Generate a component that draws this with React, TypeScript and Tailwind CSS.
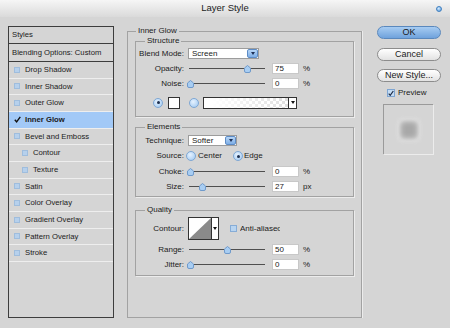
import React from "react";

const items = [
  { label: "Drop Shadow" },
  { label: "Inner Shadow" },
  { label: "Outer Glow" },
  { label: "Inner Glow", active: true },
  { label: "Bevel and Emboss" },
  { label: "Contour", indent: true },
  { label: "Texture", indent: true },
  { label: "Satin" },
  { label: "Color Overlay" },
  { label: "Gradient Overlay" },
  { label: "Pattern Overlay" },
  { label: "Stroke" },
];

function Radio({ on }: { on?: boolean }) {
  return (
    <span className="flex w-[10px] h-[10px] shrink-0 items-center justify-center rounded-full border border-[#7ea7d4] bg-[radial-gradient(circle_at_40%_35%,#e6f2ff,#9cc6f0)]">
      {on && <span className="w-[3px] h-[3px] rounded-full bg-[#1d2f4f]" />}
    </span>
  );
}

function Caret() {
  return <span className="w-0 h-0 border-x-[2px] border-x-transparent border-t-[3px] border-t-[#111]" />;
}

function Dropdown({ value, wide }: { value: string; wide?: boolean }) {
  return (
    <div
      className={
        "flex h-[11px] items-stretch border border-[#9c9c9c] bg-white " +
        (wide ? "w-[71px]" : "w-[49px]")
      }
    >
      <span className="flex-1 pl-[3px] leading-[9px]">{value}</span>
      <span className="flex w-[11px] items-center justify-center rounded-[2px] border border-[#5d8cc6] bg-[linear-gradient(#b7d6f7,#7eaee6)]">
        <span className="w-0 h-0 border-x-[2.5px] border-x-transparent border-t-[3px] border-t-[#1c2f55]" />
      </span>
    </div>
  );
}

function NumBox({ value }: { value: string }) {
  return (
    <div className="w-[27px] h-[11px] border border-[#c8c8c8] bg-white pl-[2px] leading-[9px] text-[#222]">
      {value}
    </div>
  );
}

function SliderRow({
  label,
  pos,
  value,
  unit = "%",
}: {
  label: string;
  pos: number;
  value: string;
  unit?: string;
}) {
  return (
    <div className="flex h-[15px] items-center">
      <span className="w-[48px] text-right">{label}</span>
      <div className="relative ml-[5px] flex h-[10px] w-[76px] items-center">
        <div className="h-px w-full bg-[#4f4f4f]" />
        <svg
          className="absolute top-[1px]"
          style={{ left: pos - 3.5 }}
          width="7"
          height="8"
          viewBox="0 0 7 8"
        >
          <path
            d="M3.5 0.5 L6.5 3 L6.5 6 Q6.5 7.5 5 7.5 L2 7.5 Q0.5 7.5 0.5 6 L0.5 3 Z"
            fill="#a8cdf2"
            stroke="#6f9acb"
            strokeWidth="1"
          />
        </svg>
      </div>
      <div className="ml-[7px]">
        <NumBox value={value} />
      </div>
      <span className="ml-[4px]">{unit}</span>
    </div>
  );
}

function Group({
  title,
  children,
  className = "",
}: {
  title: string;
  children: React.ReactNode;
  className?: string;
}) {
  return (
    <fieldset className={"border border-[#a2a2a2] shadow-[1px_1px_0_#ececec] " + className}>
      <legend className="ml-[9px] px-[2px] leading-[10px]">{title}</legend>
      {children}
    </fieldset>
  );
}

export default function App() {
  return (
    <div className="w-[450px] h-[328px] overflow-hidden bg-[#d5d5d5] font-['Liberation_Sans',Arial,sans-serif] text-[8px] text-[#1b1b1b]">
      {/* title bar */}
      <div className="grid h-[17px] grid-cols-[1fr_auto_1fr] items-center bg-[linear-gradient(#f6f6f6,#dadada)]">
        <span />
        <span className="text-[9.5px] text-[#222]">Layer Style</span>
        <span className="mr-[8px] h-[6px] w-[6px] justify-self-end rounded-full border border-[#3f7fc0] bg-[radial-gradient(circle_at_40%_35%,#d6ecff,#4f94d8)]" />
      </div>

      <div className="flex items-start pt-[9px]">
        {/* styles list */}
        <div className="ml-[8px] flex h-[292px] w-[106px] flex-col border border-[#3d3d3d] text-[7.7px]">
          <div className="h-[17px] border-b border-[#3d3d3d] pl-[3px] leading-[16px]">Styles</div>
          <div className="h-[18px] border-b border-[#3d3d3d] pl-[3px] leading-[17px]">
            Blending Options: Custom
          </div>
          {items.map((it) => (
            <div
              key={it.label}
              className={
                "flex h-[16.67px] items-center border-b border-[#eeeeee] " +
                (it.indent ? "pl-[13px] " : "pl-[5px] ") +
                (it.active ? "bg-[#a2c9f7] font-bold" : "")
              }
            >
              {it.active ? (
                <svg width="7" height="7" viewBox="0 0 7 7" className="mr-[3px]">
                  <path d="M0.8 3.8 L2.6 5.8 L6.3 0.8" fill="none" stroke="#111" strokeWidth="1.4" />
                </svg>
              ) : (
                <span className="mr-[4px] h-[6px] w-[6px] border border-[#9fbddd] bg-[#b6d0ec]" />
              )}
              <span className="pl-[1px]">{it.label}</span>
            </div>
          ))}
        </div>

        {/* settings */}
        <fieldset className="ml-[13px] h-[292px] w-[235px] border border-[#a2a2a2] shadow-[1px_0_0_#ececec]">
          <legend className="ml-[8px] px-[2px] leading-[10px]">Inner Glow</legend>
          <div className="px-[7px]">
            <Group title="Structure">
              <div className="flex h-[15px] items-center">
                <span className="w-[48px] text-right">Blend Mode:</span>
                <div className="ml-[4px]">
                  <Dropdown value="Screen" wide />
                </div>
              </div>
              <SliderRow label="Opacity:" pos={58} value="75" />
              <SliderRow label="Noise:" pos={1} value="0" />
              <div className="mt-[4px] flex h-[15px] items-center pl-[17px]">
                <Radio on />
                <span className="ml-[5px] h-[12px] w-[12px] border border-[#333] bg-white" />
                <span className="ml-[9px]">
                  <Radio />
                </span>
                <div className="ml-[4px] flex h-[12px] w-[94px] border border-[#333] bg-[linear-gradient(to_right,#fff_8%,rgba(255,255,255,0)),repeating-conic-gradient(#dcdcdc_0%_25%,#fff_0%_50%)] bg-[length:100%_100%,6px_6px]">
                  <span className="flex-1" />
                  <span className="flex w-[8px] items-center justify-center border-l border-[#333] bg-white">
                    <Caret />
                  </span>
                </div>
              </div>
              <div className="h-[6px]" />
            </Group>

            <Group title="Elements" className="mt-[5px]">
              <div className="pt-[1px]">
                <div className="flex h-[15px] items-center">
                  <span className="w-[48px] text-right">Technique:</span>
                  <div className="ml-[4px]">
                    <Dropdown value="Softer" />
                  </div>
                </div>
                <div className="flex h-[16px] items-center">
                  <span className="w-[48px] text-right">Source:</span>
                  <span className="ml-[2px]">
                    <Radio />
                  </span>
                  <span className="ml-[2px] w-[24px]">Center</span>
                  <span className="ml-[11px]">
                    <Radio on />
                  </span>
                  <span className="ml-[1px]">Edge</span>
                </div>
                <SliderRow label="Choke:" pos={1} value="0" />
                <SliderRow label="Size:" pos={13} value="27" unit="px" />
                <div className="h-[2px]" />
              </div>
            </Group>

            <Group title="Quality" className="mt-[8px]">
              <div className="mt-[2px] flex h-[23px] items-center">
                <span className="w-[48px] text-right">Contour:</span>
                <div className="ml-[4px] flex h-[23px] w-[31px] border border-[#333] bg-white">
                  <svg width="22" height="21" viewBox="0 0 22 21">
                    <polygon points="0,21 22,0 22,21" fill="#8a8a8a" />
                  </svg>
                  <span className="flex w-[7px] items-center justify-center border-l border-[#333]">
                    <Caret />
                  </span>
                </div>
                <span className="ml-[11px] h-[7px] w-[7px] border border-[#86acd6] bg-[#b8d4f0]" />
                <span className="ml-[3px] w-[40px] overflow-hidden whitespace-nowrap">Anti-aliased</span>
              </div>
              <div className="mt-[2px]">
                <SliderRow label="Range:" pos={38} value="50" />
                <SliderRow label="Jitter:" pos={1} value="0" />
              </div>
              <div className="h-[3px]" />
            </Group>
          </div>
        </fieldset>

        {/* buttons */}
        <div className="ml-[15px] flex w-[64px] flex-col">
          <button className="h-[13px] rounded-full border border-[#5a88bd] bg-[linear-gradient(#a7ccf2,#6fa2dc)] text-[9px] leading-[11px] text-[#1a1a1a]">
            OK
          </button>
          <button className="mt-[9px] h-[13px] rounded-full border border-[#8c8c8c] bg-[linear-gradient(#ffffff,#e2e2e2)] text-[9px] leading-[11px]">
            Cancel
          </button>
          <button className="mt-[8px] h-[13px] rounded-full border border-[#8c8c8c] bg-[linear-gradient(#ffffff,#e2e2e2)] text-[9px] leading-[11px]">
            New Style...
          </button>
          <div className="mt-[5px] flex h-[12px] items-center pl-[10px]">
            <span className="flex h-[8px] w-[8px] items-center justify-center border border-[#7ea5d2] bg-[#c4dcf4]">
              <svg width="7" height="7" viewBox="0 0 7 7">
                <path d="M0.8 3.6 L2.6 5.6 L6.2 0.6" fill="none" stroke="#1c2a45" strokeWidth="1.4" />
              </svg>
            </span>
            <span className="ml-[3px]">Preview</span>
          </div>
          <div className="ml-[6px] mt-[5px] flex h-[50px] w-[50px] items-center justify-center border-l border-t border-[#9a9a9a] shadow-[1px_1px_0_#ececec]">
            <div className="h-[20px] w-[20px] rounded-[3px] bg-[#a8a8a8] shadow-[inset_0_0_6px_#ffffff,0_0_4px_#e8e8e8] blur-[0.8px]" />
          </div>
        </div>
      </div>
    </div>
  );
}
